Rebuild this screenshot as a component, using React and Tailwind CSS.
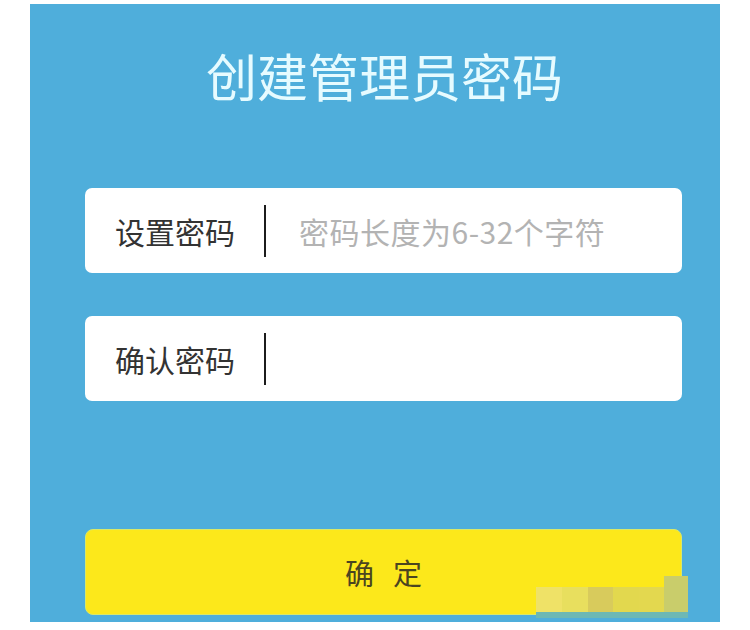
export default function App() {
  const font = { fontFamily: '"Noto Sans CJK SC", "Noto Sans", sans-serif' };
  return (
    <div className="w-[750px] h-[630px] bg-white overflow-hidden" style={font}>
      <div className="ml-[30px] mt-[4px] w-[690px] h-[618px] bg-[#4faedb] flex flex-col pl-[55px] pr-[38px]">
        <h1 className="mt-[41px] h-[60px] text-[51px] leading-[60px] font-normal text-center text-[#e6fbff] pl-[2px]">
          创建管理员密码
        </h1>

        <div className="mt-[83px] h-[85px] rounded-[7px] bg-white flex items-center pl-[30px]">
          <span className="text-[30px] leading-none text-[#333333]">设置密码</span>
          <span className="ml-[29px] w-[2px] h-[52px] bg-[#1c1c1c]" />
          <span className="ml-[33px] text-[30px] leading-none tracking-[0.5px] text-[#b3b3b3]">
            密码长度为6-32个字符
          </span>
        </div>

        <div className="mt-[43px] h-[85px] rounded-[7px] bg-white flex items-center pl-[30px]">
          <span className="text-[30px] leading-none text-[#333333]">确认密码</span>
          <span className="ml-[29px] w-[2px] h-[52px] bg-[#1c1c1c]" />
        </div>

        <div className="relative mt-[128px] h-[86px] rounded-[8px] bg-[#fce81b] border border-[#d9e86a] flex items-center justify-center gap-[19px] text-[29px] leading-none text-[#4a4520]">
          <span>确</span>
          <span>定</span>
          <div className="absolute left-[450px] top-[46px] w-[152px] flex flex-col">
            <div className="flex items-end h-[36px]">
              <div className="w-[26px] h-[25px] bg-[#efe267]" />
              <div className="w-[26px] h-[25px] bg-[#e8df5e]" />
              <div className="w-[25px] h-[25px] bg-[#d8cb5c]" />
              <div className="w-[26px] h-[25px] bg-[#e2d84e]" />
              <div className="w-[25px] h-[25px] bg-[#e3d84f]" />
              <div className="w-[24px] h-[36px] bg-[#c9cd6b]" />
            </div>
            <div className="h-[6px] bg-[#6db8b4]" />
          </div>
        </div>
      </div>
    </div>
  );
}
